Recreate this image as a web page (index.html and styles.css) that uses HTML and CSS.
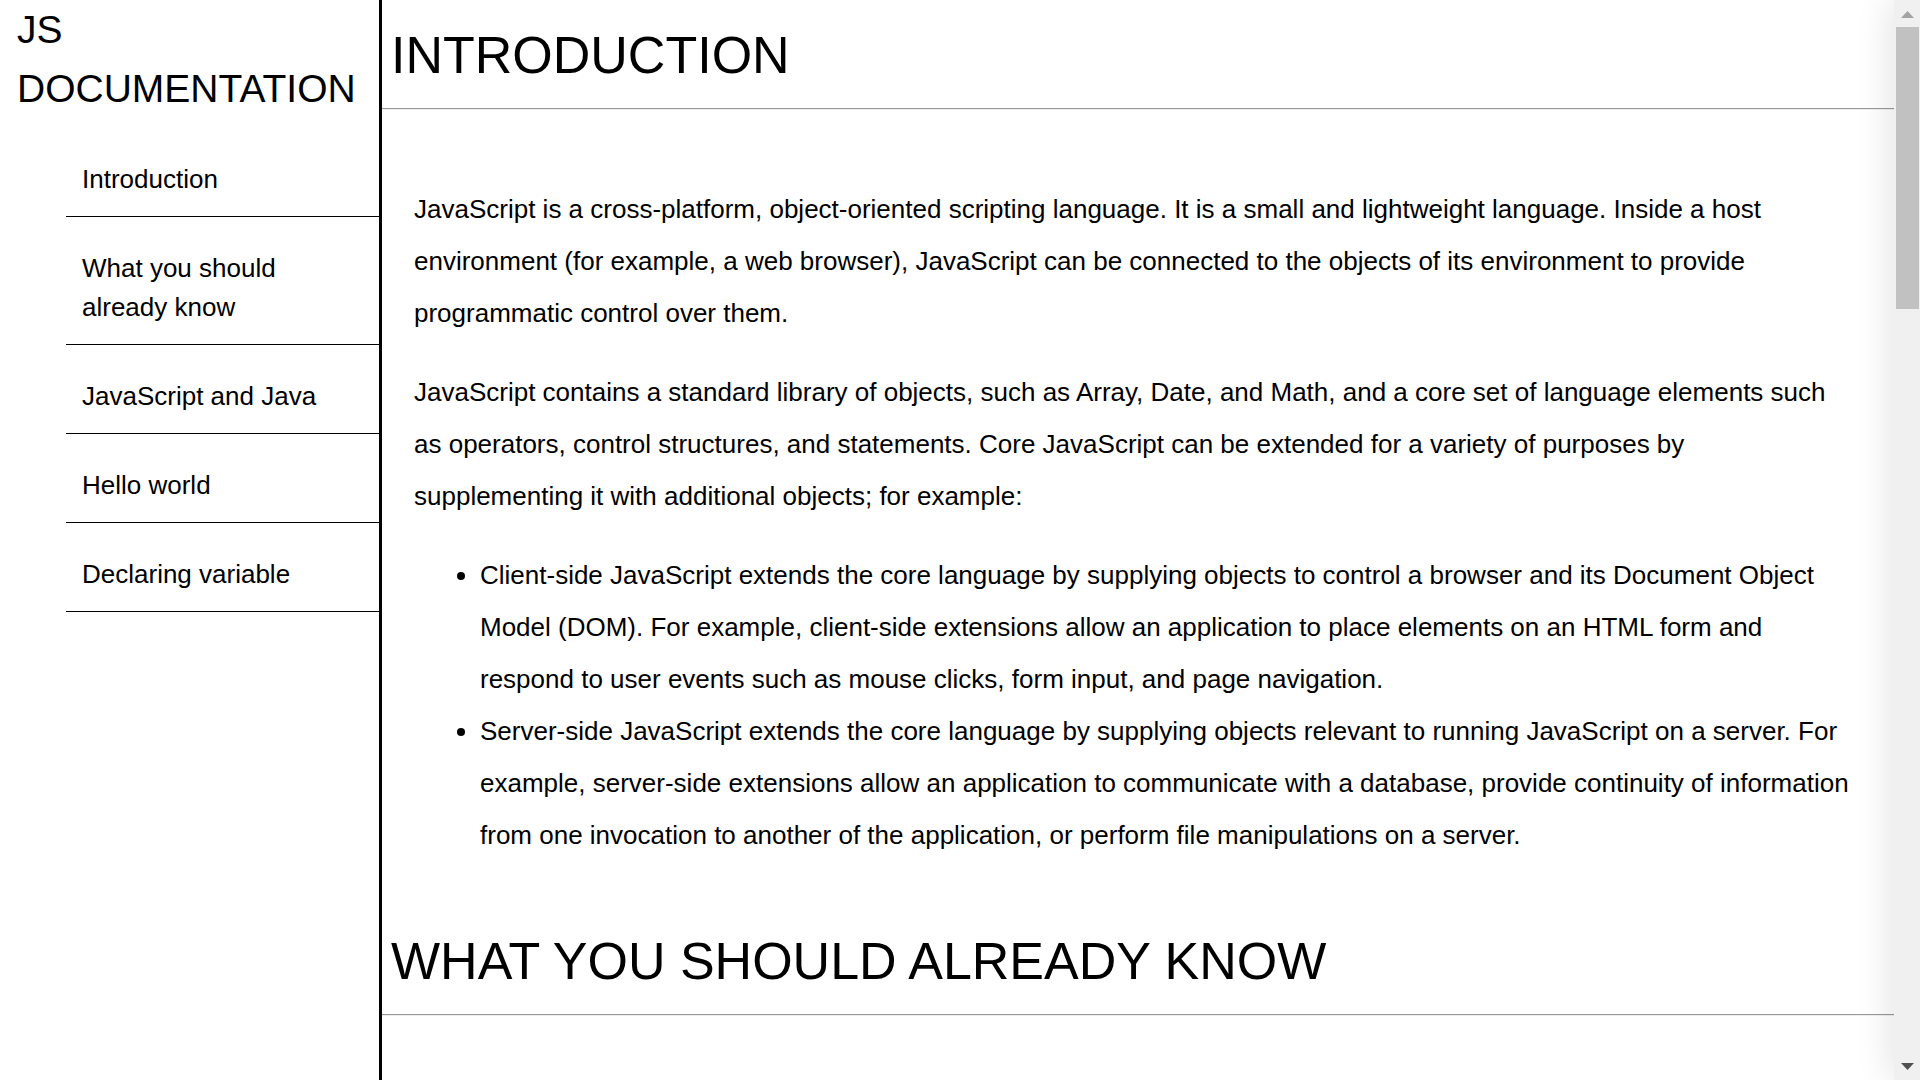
FILE: index.html
```
<!DOCTYPE html>
<html lang="en">
<head>
<meta charset="utf-8">
<meta name="viewport" content="width=device-width, initial-scale=1">
<title>JS Documentation</title>
<link rel="stylesheet" href="styles.css">
</head>
<body>
<div class="layout">
  <nav class="sidebar">
    <h1 class="sidebar-title">JS DOCUMENTATION</h1>
    <ul class="menu">
      <li><a class="menu-link" href="#introduction">Introduction</a></li>
      <li><a class="menu-link" href="#already-know">What you should already know</a></li>
      <li><a class="menu-link" href="#javascript-and-java">JavaScript and Java</a></li>
      <li><a class="menu-link" href="#hello-world">Hello world</a></li>
      <li><a class="menu-link" href="#variables">Declaring variable</a></li>
    </ul>
  </nav>
  <main class="content">
    <section id="introduction">
      <h2 class="section-title">INTRODUCTION</h2>
      <hr class="rule">
      <div class="section-body">
        <p>JavaScript is a cross-platform, object-oriented scripting language. It is a small and lightweight language. Inside a host environment (for example, a web browser), JavaScript can be connected to the objects of its environment to provide programmatic control over them.</p>
        <p>JavaScript contains a standard library of objects, such as Array, Date, and Math, and a core set of language elements such as operators, control structures, and statements. Core JavaScript can be extended for a variety of purposes by supplementing it with additional objects; for example:</p>
        <ul class="points">
          <li>Client-side JavaScript extends the core language by supplying objects to control a browser and its Document Object Model (DOM). For example, client-side extensions allow an application to place elements on an HTML form and respond to user events such as mouse clicks, form input, and page navigation.</li>
          <li>Server-side JavaScript extends the core language by supplying objects relevant to running JavaScript on a server. For example, server-side extensions allow an application to communicate with a database, provide continuity of information from one invocation to another of the application, or perform file manipulations on a server.</li>
        </ul>
      </div>
    </section>
    <section id="already-know">
      <h2 class="section-title">WHAT YOU SHOULD ALREADY KNOW</h2>
      <hr class="rule">
    </section>
  </main>
  <div class="scrollbar" aria-hidden="true">
    <svg class="arrow arrow-up" viewBox="0 0 13 7"><path d="M0 7 6.500 0 13 7z"/></svg>
    <div class="track"><div class="thumb"></div></div>
    <svg class="arrow arrow-down" viewBox="0 0 13 7"><path d="M0 0h13L6.500 7z"/></svg>
  </div>
</div>
</body>
</html>
```
FILE: styles.css
```
* {
  box-sizing: border-box;
}

body {
  margin: 0;
  background: #fff;
  color: #000;
  font-family: "Liberation Sans", Arial, sans-serif;
  font-size: 26px;
}

.layout {
  display: flex;
  height: 100vh;
  overflow: hidden;
}

.sidebar {
  flex: none;
  width: 382px;
  border-right: 3px solid #000;
}

.sidebar-title {
  margin: 0 17px;
  font-size: 39px;
  font-weight: 400;
  line-height: 59px;
}

.menu {
  margin: 10px 0 0 66px;
  padding: 0;
  list-style: none;
}

.menu li {
  padding: 32px 32px 17px 16px;
  border-bottom: 1px solid #000;
  line-height: 39px;
}

.menu-link {
  color: #000;
  text-decoration: none;
}

.content {
  flex: 1;
  min-width: 0;
  overflow: hidden;
}

.section-title {
  margin: 0;
  padding: 2px 9px 0;
  font-size: 52px;
  font-weight: 400;
  line-height: 106px;
}

.rule {
  margin: 0;
  border: 0 solid;
  border-width: 1px 0;
  border-color: #999 transparent #eee;
}

.section-body {
  padding: 73px 40px 45px 32px;
  line-height: 52px;
}

.section-body p {
  margin: 0 0 27px;
}

.points {
  margin: 0;
  padding-left: 66px;
}

.scrollbar {
  display: flex;
  flex: none;
  flex-direction: column;
  align-items: center;
  width: 26px;
  padding: 11px 0 10px;
  background: #f0f0f0;
  box-shadow: 0 0 36px rgba(0, 0, 0, 0.15);
}

.arrow {
  flex: none;
  width: 13px;
  height: 7px;
}

.arrow-up {
  fill: #a3a3a3;
}

.arrow-down {
  fill: #505050;
}

.track {
  flex: 1;
  width: 23px;
  padding: 9px 0;
}

.thumb {
  height: calc(100% * 11 / 40);
  background: #c1c1c1;
}
```
